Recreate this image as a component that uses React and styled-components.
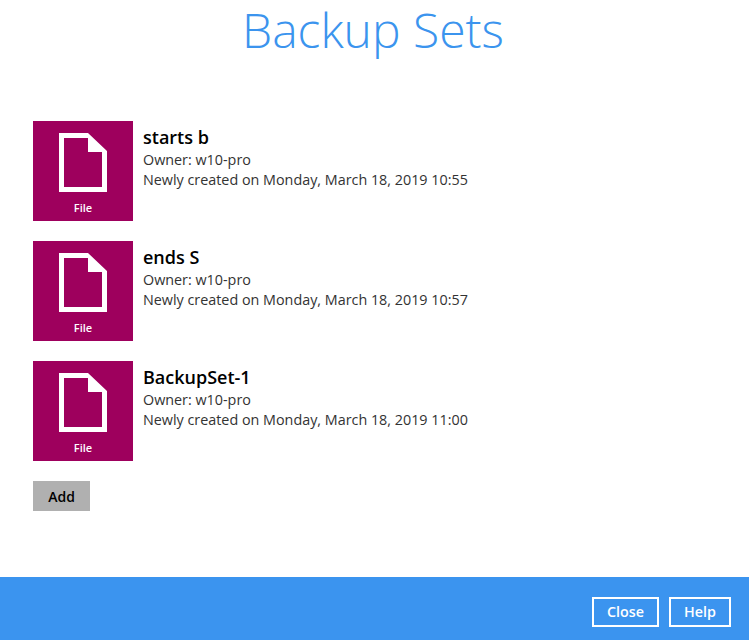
import React from "react";
import styled, { createGlobalStyle } from "styled-components";

const Global = createGlobalStyle`
  html, body { margin: 0; padding: 0; background: #fff; }
  body { font-family: "Open Sans", "Liberation Sans", sans-serif; }
`;

const Page = styled.div`
  width: 749px;
  height: 640px;
  display: flex;
  flex-direction: column;
  overflow: hidden;
`;

const Main = styled.main`
  flex: 1;
  padding: 0 33px;
`;

const Title = styled.h1`
  margin: 0 0 62px;
  padding-right: 3px;
  font-size: 48px;
  line-height: 59px;
  font-weight: 300;
  color: #3b94ee;
  text-align: center;
`;

const List = styled.div`
  display: flex;
  flex-direction: column;
  gap: 20px;
`;

const Row = styled.div`
  display: flex;
  gap: 10px;
  height: 100px;
`;

const Tile = styled.div`
  width: 100px;
  height: 100px;
  background: #9e005d;
  display: flex;
  flex-direction: column;
  align-items: center;
  color: #fff;
`;

const TileIcon = styled.svg`
  width: 48px;
  height: 59px;
  margin-top: 12px;
`;

const TileLabel = styled.span`
  margin-top: 8px;
  font-size: 11px;
  line-height: 16px;
  font-weight: 600;
`;

const Info = styled.div`
  padding-top: 4px;
  color: #333;
  font-size: 14.35px;
  line-height: 20px;
`;

const Name = styled.div`
  font-size: 18px;
  line-height: 25px;
  font-weight: 600;
  color: #000;
`;

const AddButton = styled.button`
  display: block;
  margin-top: 20px;
  width: 57px;
  height: 30px;
  border: 0;
  padding: 0;
  background: #b0b0b0;
  color: #000;
  font-family: inherit;
  font-size: 14px;
  font-weight: 600;
`;

const Footer = styled.footer`
  height: 63px;
  background: #3b94ef;
  display: flex;
  justify-content: flex-end;
  align-items: flex-start;
  gap: 10px;
  padding: 20px 18px 0 0;
  box-sizing: border-box;
`;

const FooterButton = styled.button`
  width: ${(p) => p.$w}px;
  height: 30px;
  box-sizing: border-box;
  border: 2px solid #fff;
  background: transparent;
  color: #fff;
  padding: 0 0 2px;
  font-family: inherit;
  font-size: 14.3px;
  font-weight: 600;
`;

const FileIcon = () => (
  <TileIcon viewBox="0 0 48 59" aria-hidden="true">
    <path
      fillRule="evenodd"
      fill="#fff"
      d="M0 0H29L48 18V59H0Z M5 5V54H43V19H29V5Z"
    />
  </TileIcon>
);

const sets = [
  { name: "starts b", time: "10:55" },
  { name: "ends S", time: "10:57" },
  { name: "BackupSet-1", time: "11:00" },
];

export default function App() {
  return (
    <Page>
      <Global />
      <Main>
        <Title>Backup Sets</Title>
        <List>
          {sets.map((s) => (
            <Row key={s.name}>
              <Tile>
                <FileIcon />
                <TileLabel>File</TileLabel>
              </Tile>
              <Info>
                <Name>{s.name}</Name>
                <div>Owner: w10-pro</div>
                <div>Newly created on Monday, March 18, 2019 {s.time}</div>
              </Info>
            </Row>
          ))}
        </List>
        <AddButton>Add</AddButton>
      </Main>
      <Footer>
        <FooterButton $w={67}>Close</FooterButton>
        <FooterButton $w={62}>Help</FooterButton>
      </Footer>
    </Page>
  );
}
